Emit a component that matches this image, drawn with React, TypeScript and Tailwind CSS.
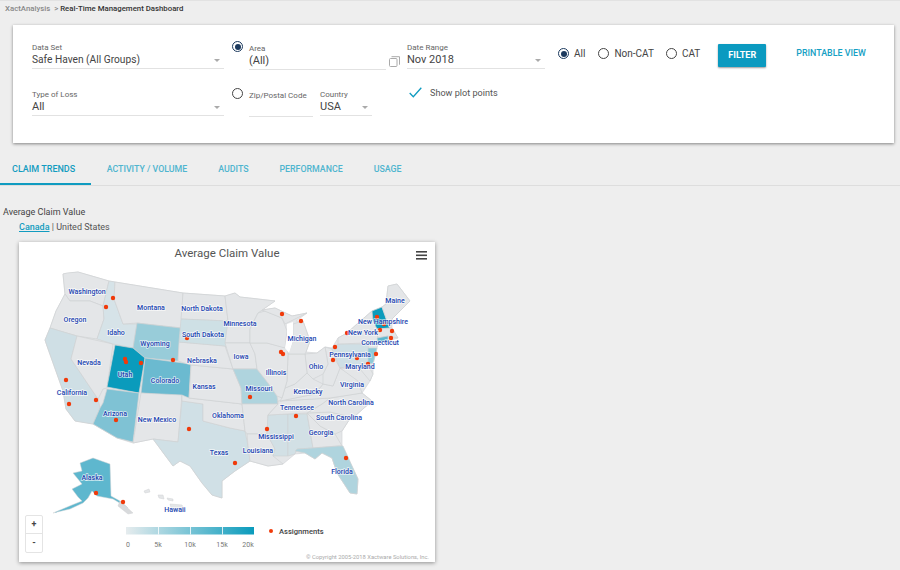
import React from 'react';

type Region = { fill: string; points: string };

const GRAY = '#e4e6e8';

const OUTLINE = '63,273 78,271 109,280 115,281 183,292 225,295 235,292 240,296 258,298 275,300 262,309 275,307 292,315 307,312 296,320 303,320 310,340 306,351 317,352 325,346 332,347 338,337 347,332 357,323 372,310 382,306 386,303 388,285 397,283 410,300 392,318 392,327 398,337 388,340 378,342 377,347 373,363 373,373 370,380 362,392 372,400 355,415 351,416 342,430 342,445 358,478 357,493 350,492 337,472 332,457 322,452 315,458 305,452 295,453 283,463 268,465 250,460 235,470 222,480 222,497 212,494 202,482 190,465 180,460 173,465 153,438 133,442 117,437 93,423 75,420 66,408 63,390 47,345 45,339 50,327 56,310 65,293';

const STATES: Region[] = [
  { fill: GRAY, points: '63,273 67,272 78,271 109,280 103,305 90,300 70,300 65,293' },
  { fill: GRAY, points: '65,293 70,300 90,300 103,305 104,318 97,338 77,335 50,327 56,310' },
  { fill: '#cfdfe5', points: '50,327 77,335 71,358 98,398 100,407 93,423 75,420 66,408 63,390 47,345 45,339' },
  { fill: GRAY, points: '77,335 113,343 107,387 103,388 98,398 71,358' },
  { fill: '#d6e3e8', points: '109,280 115,281 114,298 123,323 137,323 133,347 113,343 97,338 104,318 103,305' },
  { fill: GRAY, points: '115,281 183,292 181,327 137,322 123,323 114,298' },
  { fill: '#98ccd9', points: '137,322 181,327 178,360 145,357 133,347' },
  { fill: '#0a9bbc', points: '115,344 133,347 145,357 139,392 107,386' },
  { fill: '#6bbad0', points: '145,357 191,363 189,397 141,392' },
  { fill: '#7fc2d4', points: '107,388 139,392 133,441 117,437 93,423 100,407 103,402' },
  { fill: GRAY, points: '141,392 182,394 178,441 153,438 133,442' },
  { fill: '#d0e0e6', points: '182,400 203,403 203,420 230,427 245,430 248,445 250,460 235,470 222,480 222,497 212,494 202,482 190,465 180,460 173,465 153,438 178,441' },
  { fill: GRAY, points: '189,397 242,403 245,430 230,427 203,420 203,403 182,400 182,394' },
  { fill: GRAY, points: '191,364 233,368 241,387 242,403 189,397' },
  { fill: GRAY, points: '179,341 225,345 233,368 191,364 178,360' },
  { fill: GRAY, points: '183,292 225,295 228,320 181,318' },
  { fill: '#cee0e5', points: '181,318 228,320 228,348 225,345 179,341' },
  { fill: GRAY, points: '225,295 235,292 240,296 258,298 275,300 258,312 250,328 250,342 225,342 228,320' },
  { fill: GRAY, points: '225,342 250,342 255,353 257,368 233,368' },
  { fill: '#afd4de', points: '233,368 257,368 268,382 277,395 278,403 242,403 241,387' },
  { fill: GRAY, points: '242,403 278,403 268,414 267,433 247,433 245,430' },
  { fill: GRAY, points: '247,433 267,433 275,448 273,455 283,463 268,465 250,460 248,445' },
  { fill: '#d2e0e5', points: '268,414 288,413 288,455 273,455 275,448 267,433' },
  { fill: '#d2e0e5', points: '288,413 307,413 313,447 297,448 295,453 288,455' },
  { fill: GRAY, points: '307,412 320,425 335,433 342,445 338,445 313,447' },
  { fill: '#afd4de', points: '295,450 297,448 313,447 338,445 343,445 358,478 357,493 350,492 337,472 332,457 322,452 315,458 305,452' },
  { fill: GRAY, points: '307,412 330,411 351,416 342,430 335,433 320,425' },
  { fill: GRAY, points: '330,397 362,392 372,400 355,415 351,416 330,411 307,412 322,403' },
  { fill: GRAY, points: '278,400 330,397 322,403 307,412 268,414 278,403' },
  { fill: GRAY, points: '315,393 323,383 333,385 340,367 358,380 362,392 330,397 280,400' },
  { fill: GRAY, points: '285,387 295,383 307,372 313,378 323,383 315,393 280,400 282,397' },
  { fill: GRAY, points: '325,346 332,348 336,360 340,367 333,385 323,383 323,373 328,363' },
  { fill: GRAY, points: '305,353 317,352 325,346 328,363 323,373 313,378 307,372' },
  { fill: GRAY, points: '288,353 305,353 307,372 295,383 285,387 287,380' },
  { fill: GRAY, points: '267,342 287,347 288,353 287,380 282,397 277,395 268,382 257,368 255,353 250,342' },
  { fill: GRAY, points: '258,312 265,310 282,317 287,330 285,347 267,342 250,342 250,328' },
  { fill: GRAY, points: '293,323 303,320 310,340 306,351 305,353 288,353 293,340' },
  { fill: GRAY, points: '262,309 275,307 292,315 307,312 285,323 282,317' },
  { fill: '#cfdfe5', points: '332,348 338,343 368,343 370,363 340,367' },
  { fill: '#8ccad9', points: '368,347 377,347 373,363 368,362' },
  { fill: GRAY, points: '340,367 367,362 373,373 370,380 360,368' },
  { fill: GRAY, points: '338,337 347,332 357,323 372,310 377,328 378,337 377,342 365,342 338,343' },
  { fill: '#0a9bbc', points: '372,310 382,306 387,320 390,327 377,328 373,320' },
  { fill: GRAY, points: '377,328 392,327 398,337 388,335 378,337' },
  { fill: '#5eb7ce', points: '377,337 388,335 388,340 378,342' },
  { fill: GRAY, points: '388,285 397,283 410,300 392,318 390,327 387,320 382,306 386,303' },
];

const LAKE = '287,323 293,321 293,340 289,352 285,347 287,334';
const ALASKA = '80,462 93,457 110,463 111,495 120,500 128,507 113,498 97,495 92,490 88,497 83,502 70,508 53,512 72,504 82,500 78,496 72,488 82,483 73,472 82,470';
const ALASKA_TAIL = '120,500 133,512 128,513 118,505';
const HAWAII = ['144,490 149,488 150,491 145,492', '158,494 163,494 164,498 159,497', '167,497 173,498 173,500 168,499', '170,503 182,504 185,510 172,510'];

const DOTS = [
  [113, 297], [106, 306], [125, 358], [126, 361], [141, 362], [173, 359], [66, 379], [69, 403], [96, 399], [187, 337],
  [116, 419], [189, 428], [96, 492], [123, 501], [282, 313], [301, 320], [281, 351], [283, 353], [335, 346], [333, 359],
  [357, 357], [376, 353], [368, 363], [380, 329], [384, 323], [377, 316], [392, 330], [391, 337], [347, 332], [250, 396],
  [296, 415], [267, 428], [235, 462], [346, 457],
];

const LABELS: [string, number, number][] = [
  ['Washington', 87, 290], ['Oregon', 75, 318], ['Idaho', 116, 331], ['Montana', 151, 306], ['North Dakota', 202, 307],
  ['South Dakota', 203, 333], ['Minnesota', 240, 322], ['Wyoming', 155, 342], ['Nevada', 89, 361], ['Utah', 125, 373],
  ['Colorado', 165, 379], ['Nebraska', 202, 359], ['Kansas', 204, 385], ['Iowa', 241, 355], ['Illinois', 276, 371],
  ['Missouri', 259, 387], ['Michigan', 302, 337], ['Ohio', 316, 365], ['Kentucky', 308, 390], ['Tennessee', 297, 406],
  ['Virginia', 352, 383], ['North Carolina', 351, 401], ['South Carolina', 339, 416], ['Georgia', 321, 431],
  ['Mississippi', 276, 435], ['Louisiana', 258, 449], ['Oklahoma', 228, 414], ['Texas', 219, 451], ['New Mexico', 157, 418],
  ['Arizona', 115, 412], ['California', 72, 391], ['Alaska', 92, 476], ['Hawaii', 175, 508], ['Florida', 342, 470],
  ['Maine', 395, 299], ['New Hampshire', 383, 320], ['New York', 363, 331], ['Connecticut', 380, 341],
  ['Pennsylvania', 350, 353], ['Maryland', 360, 365],
];

const TABS = ['ACTIVITY / VOLUME', 'AUDITS', 'PERFORMANCE', 'USAGE'];

const Caret = () => <span className="block w-0 h-0 border-x-[3.5px] border-x-transparent border-t-[3.5px] border-t-[#aaaaaa]" />;

const Radio = ({ on }: { on?: boolean }) => (
  <span className={`flex items-center justify-center shrink-0 w-[11px] h-[11px] rounded-full border-[1.5px] ${on ? 'border-[#1c3a5e]' : 'border-[#444444]'}`}>
    {on && <span className="block w-[6px] h-[6px] rounded-full bg-[#1c3a5e]" />}
  </span>
);

const Field = ({ label, value, caret, className, valueClass = 'text-[11px]' }: { label: string; value?: string; caret?: boolean; className: string; valueClass?: string }) => (
  <div className={`${className} shrink-0 border-b border-[#e2e2e2]`}>
    <div className="text-[8px] leading-[12px] text-[#666666]">{label}</div>
    <div className="flex items-center justify-between h-[14px] pb-[2px] pr-1">
      <span className={`${valueClass} text-[#444444]`}>{value}</span>
      {caret && <Caret />}
    </div>
  </div>
);

const MapChart = () => (
  <svg viewBox="19 265 416 296" className="block w-[416px] h-[296px]" style={{ fontFamily: 'Roboto, sans-serif' }}>
    <defs>
      <linearGradient id="scale" x1="0" x2="1" y1="0" y2="0">
        <stop offset="0" stopColor="#e6ecee" />
        <stop offset="1" stopColor="#0a9bbc" />
      </linearGradient>
    </defs>
    <polygon points={OUTLINE} fill={GRAY} stroke="#d4d6d8" strokeWidth="0.7" strokeLinejoin="round" />
    {STATES.map((s, i) => (
      <polygon key={i} points={s.points} fill={s.fill} stroke="#d0d2d4" strokeWidth="0.7" strokeLinejoin="round" />
    ))}
    <polygon points={LAKE} fill="#ffffff" />
    <polygon points={ALASKA} fill="#5eb7ce" stroke="#d0d2d4" strokeWidth="0.5" />
    <polygon points={ALASKA_TAIL} fill="#d8dadc" stroke="#d0d2d4" strokeWidth="0.5" />
    {HAWAII.map((p, i) => (
      <polygon key={i} points={p} fill={GRAY} stroke="#d0d2d4" strokeWidth="0.5" />
    ))}
    {DOTS.map(([x, y], i) => (
      <circle key={i} cx={x} cy={y} r="2.2" fill="#f03a0a" />
    ))}
    {LABELS.map(([name, x, y]) => (
      <text key={name} x={x} y={y + 2.5} textAnchor="middle" fontSize="7" fontWeight="500" fill="#1c45b0" stroke="#ffffff" strokeWidth="1.6" strokeOpacity="0.7" paintOrder="stroke">
        {name}
      </text>
    ))}
    <rect x="126" y="526" width="128" height="7.5" fill="url(#scale)" />
    {[158, 190, 222].map((x) => (
      <rect key={x} x={x} y="526" width="0.8" height="7.5" fill="#ffffff" />
    ))}
    {[['0', 128], ['5k', 158], ['10k', 190], ['15k', 222], ['20k', 248]].map(([t, x]) => (
      <text key={t} x={x} y="546" textAnchor="middle" fontSize="7" fill="#777777">{t}</text>
    ))}
    <circle cx="271" cy="530" r="2" fill="#f03a0a" />
    <text x="279" y="533" fontSize="7.6" fontWeight="500" fill="#444444">Assignments</text>
    <text x="429" y="558" textAnchor="end" fontSize="5.8" fill="#aaaaaa">© Copyright 2005-2018 Xactware Solutions, Inc.</text>
  </svg>
);

export default function App() {
  return (
    <div className="w-[900px] h-[570px] overflow-hidden bg-[#eeeeee] border-t border-[#e2e2e2]" style={{ fontFamily: 'Roboto, sans-serif' }}>
      <div className="pl-[5px] h-[15px] text-[7.8px] leading-[15px] font-medium">
        <span className="text-[#888888]">XactAnalysis</span>
        <span className="text-[#888888]"> &nbsp;&gt; </span>
        <span className="text-[#333333]">Real-Time Management Dashboard</span>
      </div>

      {/* Filter card */}
      <section className="mt-[9px] ml-[13px] w-[881px] h-[118px] bg-white shadow-[0_1px_3px_rgba(0,0,0,0.45)] pl-[19px] pt-[17px]">
        <div className="flex items-start h-[26px]">
          <Field label="Data Set" value="Safe Haven (All Groups)" caret className="w-[192px]" valueClass="text-[10.2px]" />
          <div className="ml-[8px] -mt-[1px]"><Radio on /></div>
          <Field label="Area" value="(All)" className="ml-[6px] mt-[1px] w-[137px]" />
          <svg viewBox="0 0 11 11" className="ml-[3px] mt-[14px] w-[11px] h-[11px]" fill="none" stroke="#aaaaaa" strokeWidth="1">
            <rect x="0.5" y="2.5" width="7.5" height="8" rx="1" fill="#ffffff" />
            <path d="M2.5 0.7h8v8" />
          </svg>
          <Field label="Date Range" value="Nov 2018" caret className="ml-[7px] w-[138px]" />
          <div className="ml-[13px] mt-[4px] flex items-center text-[10px] text-[#444444]">
            <Radio on /><span className="ml-[5px]">All</span>
            <span className="ml-[13px]"><Radio /></span><span className="ml-[5px]">Non-CAT</span>
            <span className="ml-[12px]"><Radio /></span><span className="ml-[5px]">CAT</span>
          </div>
          <button className="ml-[18px] mt-[2px] w-[48px] h-[23px] bg-[#0b9ac0] rounded-[1px] shadow-[0_1px_2px_rgba(0,0,0,0.4)] text-[9px] font-bold text-white">FILTER</button>
          <span className="ml-[30px] mt-[6px] text-[8.9px] leading-[11px] font-medium text-[#16a0c4] whitespace-nowrap">PRINTABLE VIEW</span>
        </div>
        <div className="flex items-start mt-[21px]">
          <Field label="Type of Loss" value="All" caret className="w-[192px]" />
          <div className="ml-[8px] -mt-[1px]"><Radio /></div>
          <Field label="Zip/Postal Code" className="ml-[6px] mt-[1px] w-[64px] h-[27px]" />
          <Field label="Country" value="USA" caret className="ml-[7px] w-[52px]" />
          <svg viewBox="0 0 13 11" className="ml-[37px] -mt-[2px] w-[13px] h-[11px]" fill="none" stroke="#0f9bc0" strokeWidth="1.3">
            <path d="M0.7 6L4.3 9.7L12.3 0.7" />
          </svg>
          <span className="ml-[8px] mt-[-1px] text-[9.1px] leading-[11px] text-[#555555]">Show plot points</span>
        </div>
      </section>

      {/* Tabs */}
      <nav className="mt-[12px] h-[31px] flex border-b border-[#dddddd] text-[8.8px] font-medium">
        <div className="pl-[12px] pr-[16px] h-[30px] text-[9px] leading-[29px] border-b-2 border-[#0f9bc0] text-[#129cc0]">CLAIM TRENDS</div>
        {TABS.map((t) => (
          <div key={t} className="px-[15.5px] leading-[29px] text-[#4fb5cf]">{t}</div>
        ))}
      </nav>

      <div className="mt-[20px] pl-[3px] text-[9px] leading-[12px] text-[#444444]">Average Claim Value</div>
      <div className="mt-[3px] pl-[19px] text-[9px] leading-[12px] text-[#555555]">
        <span className="font-medium text-[#129cc0] underline">Canada</span> | United States
      </div>

      {/* Map card */}
      <section className="relative mt-[9px] ml-[19px] w-[416px] h-[320px] bg-white shadow-[0_1px_4px_rgba(0,0,0,0.4)]">
        <div className="relative h-[24px] text-center text-[11.5px] leading-[23px] text-[#555555]">
          Average Claim Value
          <svg viewBox="0 0 11 9" className="absolute right-[8px] top-[9px] w-[11px] h-[9px]" fill="#444444">
            <rect width="11" height="1.6" y="0" />
            <rect width="11" height="1.6" y="3.5" />
            <rect width="11" height="1.6" y="7" />
          </svg>
        </div>
        <MapChart />
        <div className="absolute left-[6px] top-[273px] w-[18px] rounded-[2px] border border-[#e4e4e4] bg-white text-center text-[9px] leading-[17px] font-bold text-[#444444]">
          <div className="h-[18px] border-b border-[#e4e4e4]">+</div>
          <div className="h-[18px]">-</div>
        </div>
      </section>
    </div>
  );
}
